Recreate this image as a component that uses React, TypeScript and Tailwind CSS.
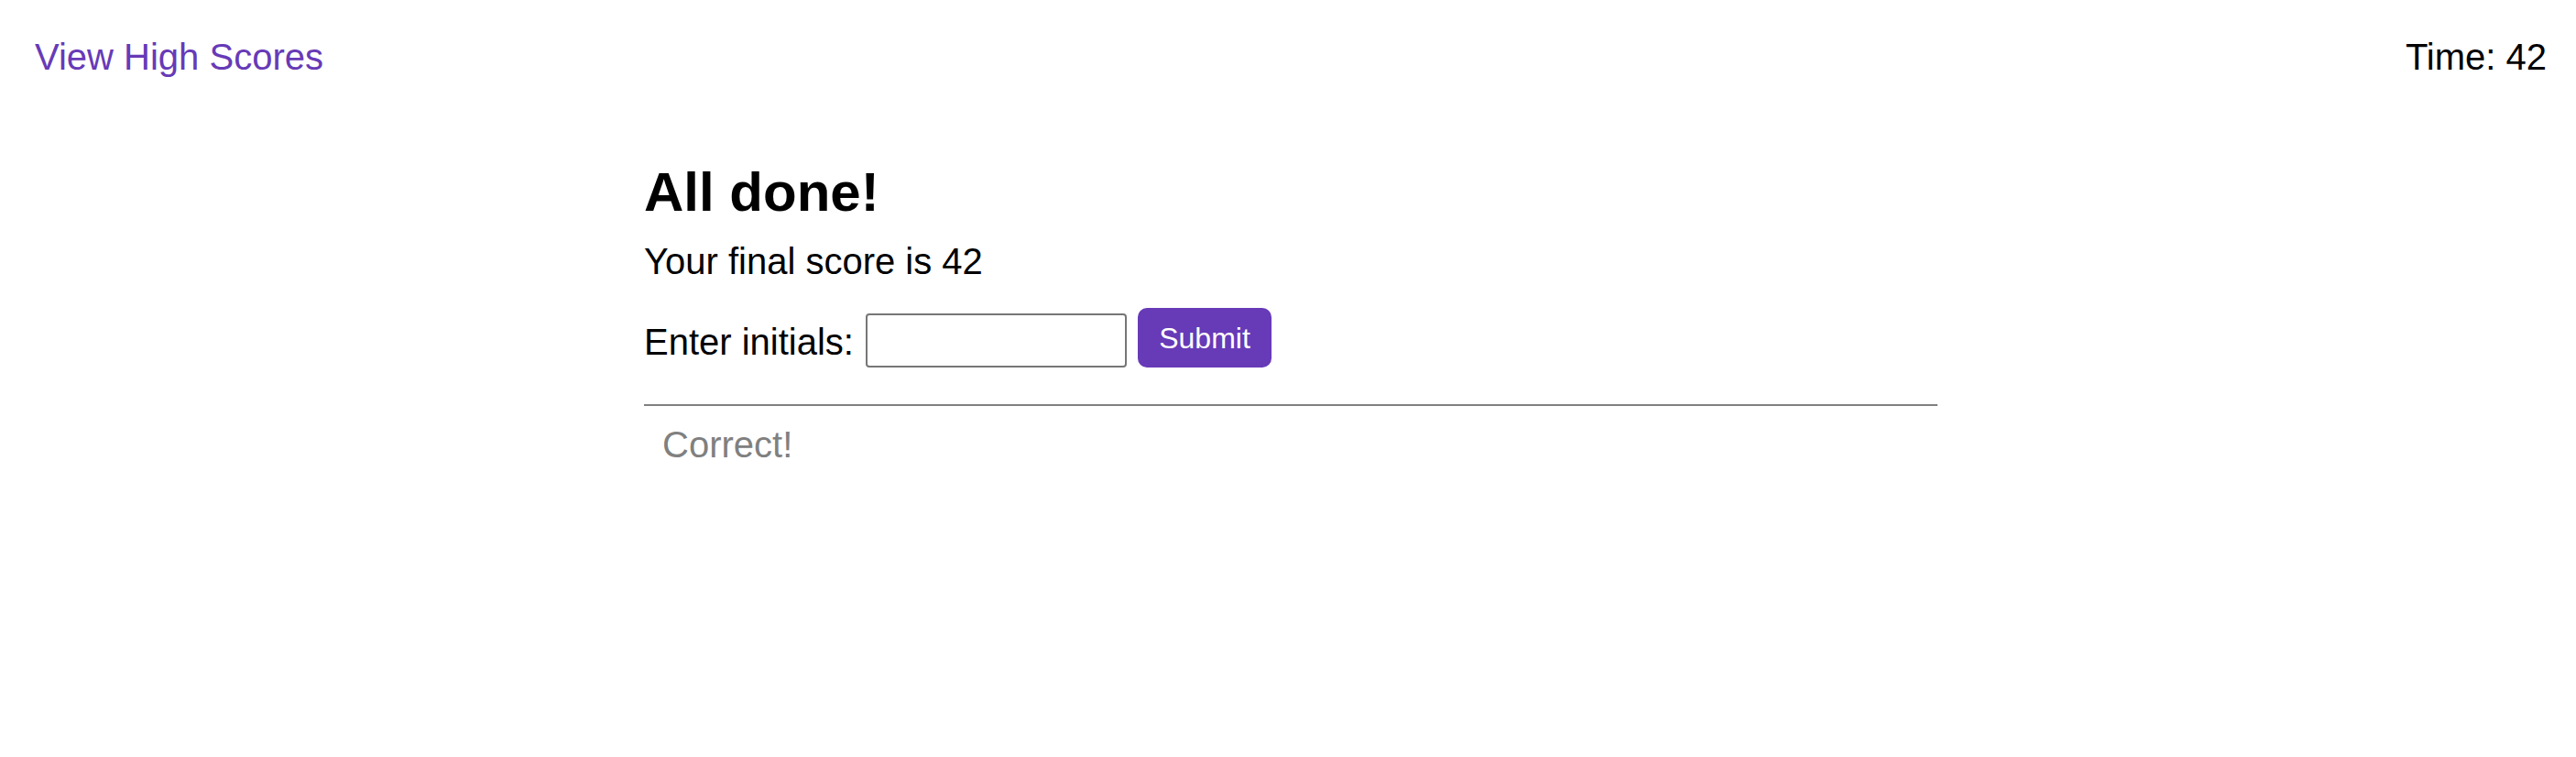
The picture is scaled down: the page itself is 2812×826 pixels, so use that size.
const App: React.FC = () => {
  return (
    <div className="w-full min-h-[826px] bg-white text-black font-['Liberation_Sans',Arial,sans-serif]">
      <header className="flex justify-between items-start pt-[39px] pl-[38px] pr-[32px] text-[40px] leading-[46px]">
        <a href="#" className="text-[#673ab7]">
          View High Scores
        </a>
        <span>Time: 42</span>
      </header>

      <main className="ml-[703px] w-[1412px] mt-[90px]">
        <h1 className="text-[60px] leading-[70px] font-bold">All done!</h1>
        <p className="mt-[17px] text-[40px] leading-[46px]">Your final score is 42</p>
        <form className="mt-[28px] flex items-end h-[65px]" onSubmit={(e) => e.preventDefault()}>
          <label htmlFor="initials" className="text-[40px] leading-[46px] mb-[5px]">
            Enter initials:
          </label>
          <input
            id="initials"
            type="text"
            className="ml-[13px] w-[285px] h-[59px] border-2 border-[#767676] rounded-[4px] bg-white"
          />
          <button
            type="submit"
            className="ml-[12px] w-[146px] h-[65px] rounded-[10px] bg-[#673ab7] text-white text-[32px]"
          >
            Submit
          </button>
        </form>
        <hr className="mt-[40px] border-0 h-[2px] bg-[#808080]" />
        <p className="mt-[19px] pl-[20px] text-[40px] leading-[46px] text-[#808080]">Correct!</p>
      </main>
    </div>
  );
};

export default App;
